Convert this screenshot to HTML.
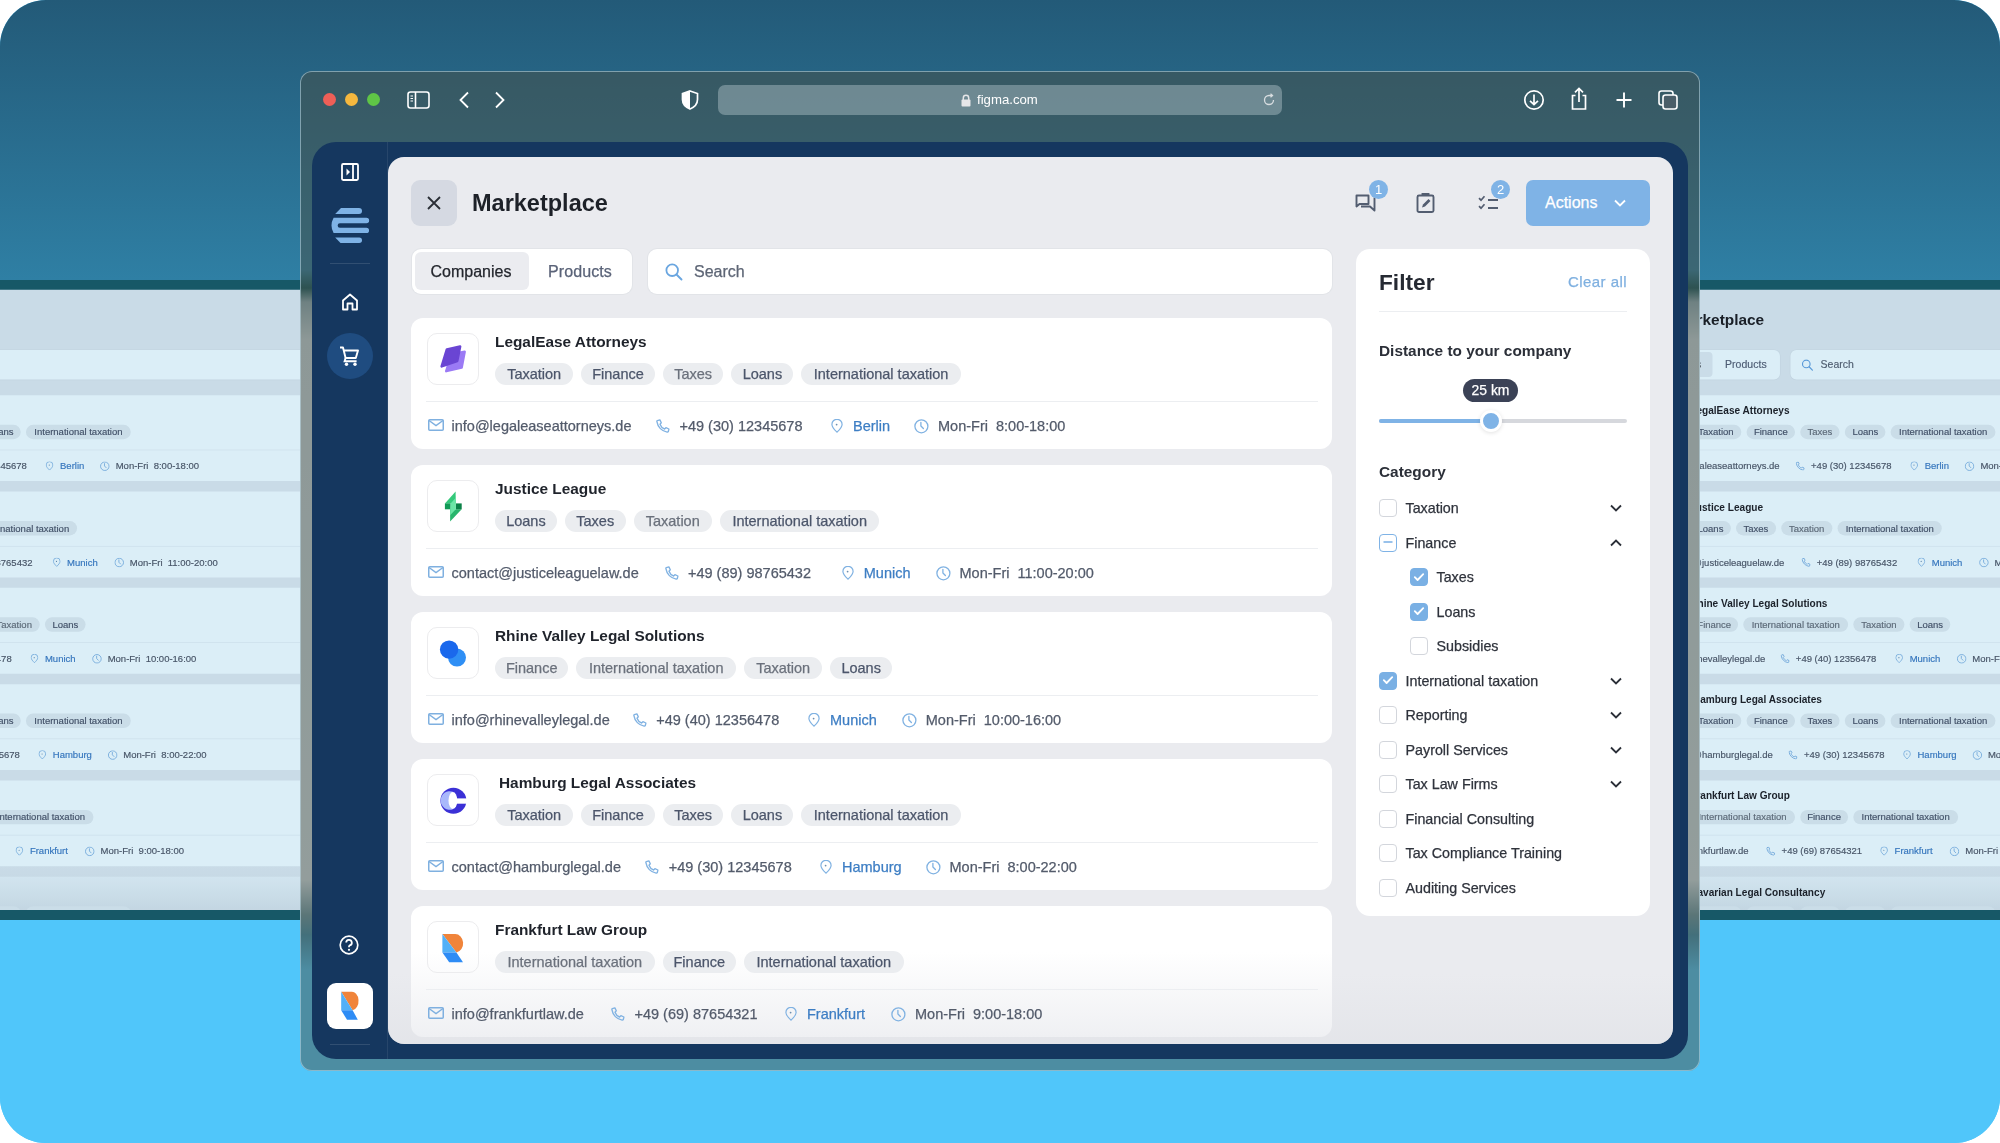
<!DOCTYPE html>
<html><head><meta charset="utf-8"><style>
.ct,.tag,.clab,.stext,.tab,.clear,.actions,.tip{-webkit-text-stroke:0.25px currentColor}
*{box-sizing:border-box;margin:0;padding:0}
html,body{width:2000px;height:1143px;background:#fff;overflow:hidden;font-family:"Liberation Sans",sans-serif}
#scene{position:absolute;left:0;top:0;width:2000px;height:1143px;border-radius:46px;overflow:hidden;background:#50c6fa}
#sky{position:absolute;left:0;top:0;width:2000px;height:285px;background:linear-gradient(#235a78,#2f80a5)}
#ground{position:absolute;left:0;top:915px;width:2000px;height:228px;background:#50c6fa}
.bgwrap{position:absolute;top:0;height:1143px;overflow:hidden}
.bgapp{position:absolute;left:0;top:0;transform-origin:0 0}
.tint{position:absolute;left:0;top:280px;width:100%;height:640px;background:#dbeef7;mix-blend-mode:multiply}
#browser{position:absolute;left:300px;top:71px;width:1400px;height:1000px;border-radius:12px;background:rgba(74,76,64,0.47);box-shadow:inset 0 0 0 1px rgba(190,220,235,0.55)}
.tl{position:absolute;top:22px;width:13px;height:13px;border-radius:50%}
.frame{position:absolute;left:12px;top:71px;width:1376px;background:#15375f;border-radius:24px 24px 24px 24px}
.sidebar{position:absolute;left:0;top:0;width:76px;height:100%}
.si{position:absolute}
.sdiv{position:absolute;left:18px;width:40px;height:1px;background:rgba(255,255,255,0.12)}
.cartc{position:absolute;left:15px;top:191px;width:46px;height:46px;border-radius:50%;background:#1f4c80;display:flex;align-items:center;justify-content:center}
.rtile{position:absolute;left:15px;width:46px;height:46px;border-radius:9px;background:#fff}
.vline{position:absolute;left:75px;top:0;width:1px;height:100%;background:rgba(255,255,255,0.08)}
.panel{position:absolute;left:76px;top:15px;width:1285px;height:886px;background:#eaebef;border-radius:16px;overflow:hidden}
.closebtn{position:absolute;left:23px;top:23px;width:46px;height:46px;border-radius:9px;background:#d5d9e2;display:flex;align-items:center;justify-content:center}
.title{position:absolute;left:84px;top:31px;font-size:23.5px;font-weight:700;color:#1d2128;line-height:30px}
.hicon{position:absolute}
.badge{position:absolute;width:19px;height:19px;border-radius:50%;background:#7fb3e6;color:#fff;font-size:13px;line-height:19px;text-align:center}
.actions{position:absolute;left:1138px;top:23px;width:124px;height:46px;border-radius:7px;background:#7fb3e6;color:#fff;font-size:16px;line-height:46px;padding-left:19px;display:flex;align-items:center}
.tabs{position:absolute;left:24px;top:92px;width:220px;height:45px;background:#fff;border-radius:9px;box-shadow:0 0 0 1px #e2e4e8}
.tab{position:absolute;top:3px;height:38px;line-height:40px;font-size:16px}
.tab.active{left:3px;width:114px;background:#ebecf0;border-radius:6px;color:#23262d;padding-left:15.5px}
.tab.prod{left:136px;color:#5a6378;letter-spacing:0.1px}
.search{position:absolute;left:260px;top:92px;width:684px;height:45px;background:#fff;border-radius:9px;box-shadow:0 0 0 1px #e2e4e8}
.stext{position:absolute;left:46px;top:0;line-height:45px;font-size:16px;color:#5d6575}
.list{position:absolute;left:0;top:0;width:960px;height:886px}
.card{position:absolute;left:23px;width:921px;height:131px;background:#fff;border-radius:12px}
.logo{position:absolute;left:16px;top:15.4px;width:52px;height:52px;border:1px solid #ececee;border-radius:10px}
.cname{position:absolute;left:84px;top:15px;font-size:15.4px;font-weight:700;color:#1f232b;line-height:18px}
.tags{position:absolute;left:84px;top:45px;display:flex;gap:8px}
.tag{display:block;height:22px;line-height:22px;text-align:center;white-space:nowrap;border-radius:11px;background:#ebedf0;font-size:14.5px}
.cdiv{position:absolute;left:15px;right:14px;top:83px;height:1px;background:#eceef1}
.ic{position:absolute;top:101px}
.ic.pin{top:100.5px}
.ic svg{display:block}
.ct{position:absolute;top:98.5px;line-height:18px;font-size:14.5px;color:#535b6b;white-space:pre}
.city{color:#3d7ec4}
.filter{position:absolute;left:968px;top:92px;width:294px;height:667px;background:#fff;border-radius:14px}
.ftitle{position:absolute;left:23px;top:20px;font-size:22.7px;font-weight:700;color:#262a33;line-height:26px}
.clear{position:absolute;right:23px;top:24px;font-size:15px;letter-spacing:0.45px;color:#7fb0e0;line-height:18px}
.fdiv{position:absolute;left:23px;right:23px;top:61.5px;height:1px;background:#eceef1}
.dist{position:absolute;left:23px;top:93px;font-size:15.4px;font-weight:700;color:#2b2f38;line-height:18px}
.tip{position:absolute;left:107px;top:129.5px;width:55px;height:23.5px;border-radius:12px;background:#3b4256;color:#fff;font-size:13.9px;line-height:23.5px;text-align:center}
.track{position:absolute;left:23px;top:170px;width:248px;height:4px;border-radius:2px;background:#d6d8dd}
.trackfill{position:absolute;left:23px;top:170px;width:112px;height:4px;border-radius:2px;background:#7fb3e6}
.thumb{position:absolute;left:123.5px;top:161px;width:22px;height:22px;border-radius:50%;background:#7fb3e6;border:3.5px solid #fff;box-shadow:0 1px 4px rgba(0,0,0,0.12)}
.cat{position:absolute;left:23px;top:214px;font-size:15.4px;font-weight:700;color:#2b2f38;line-height:18px}
.crow{position:absolute;height:18px;display:flex;align-items:center}
.cb{display:block;width:18px;height:18px;border-radius:4px;border:1.5px solid #d3d6dc;margin-right:8.5px;position:relative}
.cb svg{position:absolute;left:-1.5px;top:-1.5px}
.cb.minus{border-color:#7fb3e6}
.cb.checked{background:#7ab0e4;border-color:#7ab0e4}
.clab{font-size:14.3px;color:#2f333c;line-height:18px}
.chev{position:absolute;left:254px}
.chev svg{display:block}
.ustrip{position:absolute;width:12px;top:240px;height:760px;background:linear-gradient(#2e7aa0 0,#2f7fa3 30px,#145760 48px,#8fb0bd 62px,#c9dce5 100px,#d3e5ee 640px,#6a9aaa 675px,#3d8fb0 695px,#50c6fa 730px)}
.fade{position:absolute;left:0;bottom:0;width:100%;height:70px;background:linear-gradient(rgba(233,234,238,0),rgba(220,222,227,0.45))}
</style></head>
<body><div id="scene">
<div id="sky"></div>
<div id="ground"></div>
<div class="bgwrap" style="left:0px;width:300px">
  <div class="bgapp" style="transform:translate(-498.7px,187px) scale(0.655)">
    <div style="position:absolute;left:300px;top:71px;width:1400px;height:1000px"><div class="frame" style="height:977px;background:#1a5e6a">
  <div class="sidebar">
    <svg class="si" style="left:29px;top:21px" width="18" height="18" viewBox="0 0 18 18"><rect x="1" y="1" width="16" height="16" rx="1.2" fill="none" stroke="#fff" stroke-width="1.8"/><path d="M12 1V17" stroke="#fff" stroke-width="1.8"/><path d="M5.5 5.5L9 9L5.5 12.5Z" fill="#fff"/></svg>
    <svg class="si" style="left:18px;top:63px" width="40" height="40" viewBox="0 0 40 40"><g fill="#7fb3e6"><path d="M11 2.9H29A3 3 0 0 1 29 8.9H5.2Z"/><path d="M3.6 12.8H36.4A2.75 2.75 0 0 1 36.4 18.3H9.9A2.25 2.25 0 0 0 9.9 22.8H36.4A2.65 2.65 0 0 1 36.4 28.1H3.6Q-0.6 20.45 3.6 12.8Z"/><path d="M5.2 32.5H29.25A2.75 2.75 0 0 1 29.25 38H10.5Z"/></g></svg>
    <div class="sdiv" style="top:121px"></div>
    <svg class="si" style="left:29px;top:151px" width="18" height="18" viewBox="0 0 18 18"><path d="M2 16.5V7.5L9 1.5L16 7.5V16.5H11.5V10.5H6.5V16.5Z" fill="none" stroke="#fff" stroke-width="1.8" stroke-linejoin="round"/></svg>
    <div class="cartc"><svg width="22" height="22" viewBox="0 0 22 22"><path d="M1 2.5h3l2.6 10.5h10.2l2.2-7.5H5.2" fill="none" stroke="#fff" stroke-width="1.9" stroke-linejoin="round"/><path d="M6.6 13l-1 3.2h12" fill="none" stroke="#fff" stroke-width="1.9"/><circle cx="7.5" cy="19.2" r="1.7" fill="#fff"/><circle cx="16" cy="19.2" r="1.7" fill="#fff"/></svg></div>
    <svg class="si" style="left:27px;top:852.5px" width="20" height="20" viewBox="0 0 20 20"><circle cx="10" cy="10" r="8.8" fill="none" stroke="#fff" stroke-width="1.7"/><path d="M7.2 7.6A2.8 2.8 0 1 1 10.8 10.3C10.2 10.6 10 11 10 11.8V12.3" fill="none" stroke="#fff" stroke-width="1.8"/><circle cx="10" cy="14.8" r="1.1" fill="#fff"/></svg>
    <div class="rtile" style="top:901px"><svg width="46" height="46" viewBox="0 0 46 46" style="position:absolute;left:0;top:0"><path d="M14.2 8.8 H24.2 A6.6 9.2 0 0 1 25.6 27.2 Z" fill="#f0843a"/><path d="M14.2 8.8 L25.6 27.2 H14.2Z" fill="#52b0f7"/><path d="M14.2 27.2 H25.6 L30.8 36.8 H20Z" fill="#2e8cf5"/></svg></div>
    <div class="sdiv" style="top:962px"></div>
  </div>
  <div class="vline"></div>
  <div class="panel" style="height:947px">
  <div class="closebtn"><svg width="16" height="16" viewBox="0 0 16 16"><path d="M2 2L14 14M14 2L2 14" stroke="#2a2e36" stroke-width="1.8"/></svg></div>
  <div class="title">Marketplace</div>
  <div class="hicon" style="left:967px;top:36px"><svg width="22" height="22" viewBox="0 0 22 22"><path d="M1.5 2.5h12v8.5h-9l-3 2.5z" fill="none" stroke="#535d70" stroke-width="1.9" stroke-linejoin="round"/><path d="M6 13.5h9l4.5 4v-13" fill="none" stroke="#535d70" stroke-width="1.9" stroke-linejoin="round"/></svg></div>
  <div class="badge" style="left:981px;top:23px">1</div>
  <div class="hicon" style="left:1028px;top:35px"><svg width="20" height="22" viewBox="0 0 20 22"><rect x="1.5" y="3.5" width="16" height="16.5" rx="1.5" fill="none" stroke="#535d70" stroke-width="1.9"/><path d="M6.5 3.5V2h6v1.5" fill="none" stroke="#535d70" stroke-width="1.9"/><path d="M6 15.5l1-3 5.5-5.5 2 2-5.5 5.5z" fill="#535d70"/></svg></div>
  <div class="hicon" style="left:1090px;top:38px"><svg width="22" height="16" viewBox="0 0 22 16"><path d="M1 3.2l2 2 3.5-4M1 11.2l2 2 3.5-4" fill="none" stroke="#535d70" stroke-width="1.7"/><path d="M10 5h10M10 13h10" stroke="#535d70" stroke-width="1.9"/></svg></div>
  <div class="badge" style="left:1103px;top:23px">2</div>
  <div class="actions">Actions <svg width="12" height="8" viewBox="0 0 12 8" style="margin-left:16.5px"><path d="M1 1.5L6 6.5L11 1.5" fill="none" stroke="#fff" stroke-width="1.8"/></svg></div>
  <div class="tabs"><div class="tab active">Companies</div><div class="tab prod">Products</div></div>
  <div class="search"><svg width="18" height="18" viewBox="0 0 18 18" style="position:absolute;left:17px;top:14px"><circle cx="7.2" cy="7.2" r="5.8" fill="none" stroke="#6aa6e0" stroke-width="1.8"/><path d="M11.5 11.5L16.5 16.5" stroke="#6aa6e0" stroke-width="1.9" stroke-linecap="round"/></svg><span class="stext">Search</span></div>
  <div class="fade"></div>
  <div class="list"><div class="card" style="top:161px">
  <div class="logo"><svg width="52" height="52" viewBox="0 0 52 52" style="position:absolute;left:-1px;top:-1px"><path d="M24.6 21.5 L37.6 18.7 L34.6 34.6 L19.3 38.1Z" fill="#9b7af5" stroke="#9b7af5" stroke-width="2.6" stroke-linejoin="round"/><path d="M19.9 16.5 L33.1 13.6 L30.2 28 L14.7 33.3Z" fill="#6a45d3" stroke="#6a45d3" stroke-width="2.6" stroke-linejoin="round"/></svg></div>
  <div class="cname" style="left:84px">LegalEase Attorneys</div>
  <div class="tags"><span class="tag" style="color:#4c566b;width:78.3px">Taxation</span><span class="tag" style="color:#4c566b;width:73.4px">Finance</span><span class="tag" style="color:#6b717c;width:60.8px">Taxes</span><span class="tag" style="color:#4c566b;width:61.8px">Loans</span><span class="tag" style="color:#4c566b;width:159.6px">International taxation</span></div>
  <div class="cdiv"></div>
  <div class="ic" style="left:16.5px"><svg width="16" height="12" viewBox="0 0 16 12"><rect x="0.75" y="0.75" width="14.5" height="10.5" rx="1" fill="none" stroke="#7fb0e0" stroke-width="1.5"/><path d="M1 1.5 L8 6.5 L15 1.5" fill="none" stroke="#7fb0e0" stroke-width="1.5"/></svg></div><div class="ct" style="left:40.5px">info@legaleaseattorneys.de</div>
  <div class="ic" style="left:244.75px"><svg width="14" height="14" viewBox="0 0 14 14"><path d="M1.3 1.6 L3.9 0.9 L5.3 3.8 L4 5.2 C4.6 6.9 6.8 9.3 8.6 10 L9.9 8.7 L12.9 10 L12.3 12.6 C12.1 13.1 11.6 13.2 11.1 13.1 C5.9 12.3 1.7 8.1 0.9 2.7 C0.8 2.2 0.9 1.8 1.3 1.6Z" fill="none" stroke="#80b2e2" stroke-width="1.35" stroke-linejoin="round"/></svg></div><div class="ct" style="left:268.5px">+49 (30) 12345678</div>
  <div class="ic pin" style="left:419.5px"><svg width="12" height="14" viewBox="0 0 12 14"><path d="M6 13.2C3.4 10.6 0.9 8.2 0.9 5.4A5.1 5.1 0 0 1 11.1 5.4C11.1 8.2 8.6 10.6 6 13.2z" fill="none" stroke="#80b2e2" stroke-width="1.2"/><circle cx="5.6" cy="5.6" r="0.9" fill="#6d8fb0"/></svg></div><div class="ct city" style="left:442px">Berlin</div>
  <div class="ic" style="left:502.75px"><svg width="15" height="15" viewBox="0 0 15 15"><circle cx="7.4" cy="7.3" r="6.5" fill="none" stroke="#80b2e2" stroke-width="1.3"/><path d="M6.9 3.3V6.9L9.4 9.5" fill="none" stroke="#80b2e2" stroke-width="1.3" stroke-linecap="round"/></svg></div><div class="ct" style="left:527px">Mon-Fri&nbsp;&nbsp;8:00-18:00</div>
</div><div class="card" style="top:308px">
  <div class="logo"><svg width="52" height="52" viewBox="0 0 52 52" style="position:absolute;left:-1px;top:-1px"><path d="M28.6 11.6 L17.9 23.4 H28.8Z" fill="#34c97a"/><path d="M34.7 29.3 L23.1 41.4 V29.3Z" fill="#27b56c"/><rect x="17.9" y="23.4" width="5.8" height="5.9" fill="#119a56"/><rect x="28.7" y="23.4" width="6" height="5.9" fill="#0b8147"/><path d="M23.6 23.4 L28.8 17.8 V29.3 L23.1 35.2Z" fill="#6be6a6"/></svg></div>
  <div class="cname" style="left:84px">Justice League</div>
  <div class="tags"><span class="tag" style="color:#4c566b;width:61.8px">Loans</span><span class="tag" style="color:#4c566b;width:60.8px">Taxes</span><span class="tag" style="color:#6b717c;width:78.3px">Taxation</span><span class="tag" style="color:#4c566b;width:159.6px">International taxation</span></div>
  <div class="cdiv"></div>
  <div class="ic" style="left:16.5px"><svg width="16" height="12" viewBox="0 0 16 12"><rect x="0.75" y="0.75" width="14.5" height="10.5" rx="1" fill="none" stroke="#7fb0e0" stroke-width="1.5"/><path d="M1 1.5 L8 6.5 L15 1.5" fill="none" stroke="#7fb0e0" stroke-width="1.5"/></svg></div><div class="ct" style="left:40.5px">contact@justiceleaguelaw.de</div>
  <div class="ic" style="left:253.5px"><svg width="14" height="14" viewBox="0 0 14 14"><path d="M1.3 1.6 L3.9 0.9 L5.3 3.8 L4 5.2 C4.6 6.9 6.8 9.3 8.6 10 L9.9 8.7 L12.9 10 L12.3 12.6 C12.1 13.1 11.6 13.2 11.1 13.1 C5.9 12.3 1.7 8.1 0.9 2.7 C0.8 2.2 0.9 1.8 1.3 1.6Z" fill="none" stroke="#80b2e2" stroke-width="1.35" stroke-linejoin="round"/></svg></div><div class="ct" style="left:277px">+49 (89) 98765432</div>
  <div class="ic pin" style="left:430.75px"><svg width="12" height="14" viewBox="0 0 12 14"><path d="M6 13.2C3.4 10.6 0.9 8.2 0.9 5.4A5.1 5.1 0 0 1 11.1 5.4C11.1 8.2 8.6 10.6 6 13.2z" fill="none" stroke="#80b2e2" stroke-width="1.2"/><circle cx="5.6" cy="5.6" r="0.9" fill="#6d8fb0"/></svg></div><div class="ct city" style="left:452.75px">Munich</div>
  <div class="ic" style="left:524.5px"><svg width="15" height="15" viewBox="0 0 15 15"><circle cx="7.4" cy="7.3" r="6.5" fill="none" stroke="#80b2e2" stroke-width="1.3"/><path d="M6.9 3.3V6.9L9.4 9.5" fill="none" stroke="#80b2e2" stroke-width="1.3" stroke-linecap="round"/></svg></div><div class="ct" style="left:548.5px">Mon-Fri&nbsp;&nbsp;11:00-20:00</div>
</div><div class="card" style="top:455px">
  <div class="logo"><svg width="52" height="52" viewBox="0 0 52 52" style="position:absolute;left:-1px;top:-1px"><circle cx="30" cy="30.6" r="9" fill="#2f8ff5"/><circle cx="22.1" cy="22.6" r="9.2" fill="#1a68ec"/></svg></div>
  <div class="cname" style="left:84px">Rhine Valley Legal Solutions</div>
  <div class="tags"><span class="tag" style="color:#6b717c;width:73.4px">Finance</span><span class="tag" style="color:#6b717c;width:159.6px">International taxation</span><span class="tag" style="color:#6b717c;width:78.3px">Taxation</span><span class="tag" style="color:#4c566b;width:61.8px">Loans</span></div>
  <div class="cdiv"></div>
  <div class="ic" style="left:16.5px"><svg width="16" height="12" viewBox="0 0 16 12"><rect x="0.75" y="0.75" width="14.5" height="10.5" rx="1" fill="none" stroke="#7fb0e0" stroke-width="1.5"/><path d="M1 1.5 L8 6.5 L15 1.5" fill="none" stroke="#7fb0e0" stroke-width="1.5"/></svg></div><div class="ct" style="left:40.5px">info@rhinevalleylegal.de</div>
  <div class="ic" style="left:221.5px"><svg width="14" height="14" viewBox="0 0 14 14"><path d="M1.3 1.6 L3.9 0.9 L5.3 3.8 L4 5.2 C4.6 6.9 6.8 9.3 8.6 10 L9.9 8.7 L12.9 10 L12.3 12.6 C12.1 13.1 11.6 13.2 11.1 13.1 C5.9 12.3 1.7 8.1 0.9 2.7 C0.8 2.2 0.9 1.8 1.3 1.6Z" fill="none" stroke="#80b2e2" stroke-width="1.35" stroke-linejoin="round"/></svg></div><div class="ct" style="left:245.25px">+49 (40) 12356478</div>
  <div class="ic pin" style="left:397.0px"><svg width="12" height="14" viewBox="0 0 12 14"><path d="M6 13.2C3.4 10.6 0.9 8.2 0.9 5.4A5.1 5.1 0 0 1 11.1 5.4C11.1 8.2 8.6 10.6 6 13.2z" fill="none" stroke="#80b2e2" stroke-width="1.2"/><circle cx="5.6" cy="5.6" r="0.9" fill="#6d8fb0"/></svg></div><div class="ct city" style="left:419px">Munich</div>
  <div class="ic" style="left:491px"><svg width="15" height="15" viewBox="0 0 15 15"><circle cx="7.4" cy="7.3" r="6.5" fill="none" stroke="#80b2e2" stroke-width="1.3"/><path d="M6.9 3.3V6.9L9.4 9.5" fill="none" stroke="#80b2e2" stroke-width="1.3" stroke-linecap="round"/></svg></div><div class="ct" style="left:514.75px">Mon-Fri&nbsp;&nbsp;10:00-16:00</div>
</div><div class="card" style="top:602px">
  <div class="logo"><svg width="52" height="52" viewBox="0 0 52 52" style="position:absolute;left:-1px;top:-1px"><circle cx="26.4" cy="26.7" r="13" fill="#3b30d6"/><path d="M25.9 17.85 A9 9.3 0 1 0 25.9 35.15 Z" fill="#a9b8fb"/><ellipse cx="25.9" cy="26.6" rx="4.4" ry="8.5" fill="#fff"/><rect x="25.9" y="24.4" width="16" height="5.3" fill="#fff"/></svg></div>
  <div class="cname" style="left:88px">Hamburg Legal Associates</div>
  <div class="tags"><span class="tag" style="color:#4c566b;width:78.3px">Taxation</span><span class="tag" style="color:#4c566b;width:73.4px">Finance</span><span class="tag" style="color:#4c566b;width:60.8px">Taxes</span><span class="tag" style="color:#4c566b;width:61.8px">Loans</span><span class="tag" style="color:#4c566b;width:159.6px">International taxation</span></div>
  <div class="cdiv"></div>
  <div class="ic" style="left:16.5px"><svg width="16" height="12" viewBox="0 0 16 12"><rect x="0.75" y="0.75" width="14.5" height="10.5" rx="1" fill="none" stroke="#7fb0e0" stroke-width="1.5"/><path d="M1 1.5 L8 6.5 L15 1.5" fill="none" stroke="#7fb0e0" stroke-width="1.5"/></svg></div><div class="ct" style="left:40.5px">contact@hamburglegal.de</div>
  <div class="ic" style="left:234px"><svg width="14" height="14" viewBox="0 0 14 14"><path d="M1.3 1.6 L3.9 0.9 L5.3 3.8 L4 5.2 C4.6 6.9 6.8 9.3 8.6 10 L9.9 8.7 L12.9 10 L12.3 12.6 C12.1 13.1 11.6 13.2 11.1 13.1 C5.9 12.3 1.7 8.1 0.9 2.7 C0.8 2.2 0.9 1.8 1.3 1.6Z" fill="none" stroke="#80b2e2" stroke-width="1.35" stroke-linejoin="round"/></svg></div><div class="ct" style="left:257.75px">+49 (30) 12345678</div>
  <div class="ic pin" style="left:409.0px"><svg width="12" height="14" viewBox="0 0 12 14"><path d="M6 13.2C3.4 10.6 0.9 8.2 0.9 5.4A5.1 5.1 0 0 1 11.1 5.4C11.1 8.2 8.6 10.6 6 13.2z" fill="none" stroke="#80b2e2" stroke-width="1.2"/><circle cx="5.6" cy="5.6" r="0.9" fill="#6d8fb0"/></svg></div><div class="ct city" style="left:431px">Hamburg</div>
  <div class="ic" style="left:515.25px"><svg width="15" height="15" viewBox="0 0 15 15"><circle cx="7.4" cy="7.3" r="6.5" fill="none" stroke="#80b2e2" stroke-width="1.3"/><path d="M6.9 3.3V6.9L9.4 9.5" fill="none" stroke="#80b2e2" stroke-width="1.3" stroke-linecap="round"/></svg></div><div class="ct" style="left:538.5px">Mon-Fri&nbsp;&nbsp;8:00-22:00</div>
</div><div class="card" style="top:749px">
  <div class="logo"><svg width="52" height="52" viewBox="0 0 52 52" style="position:absolute;left:-1px;top:-1px"><path d="M15.4 13.1 H28.1 A7.9 9.2 0 0 1 29.4 31.4 Z" fill="#f0843a"/><path d="M15.4 13.1 L29.4 31.4 H15.4Z" fill="#52b0f7"/><path d="M15.4 31.4 H29.4 L36 41.3 H22.2Z" fill="#2e8cf5"/></svg></div>
  <div class="cname" style="left:84px">Frankfurt Law Group</div>
  <div class="tags"><span class="tag" style="color:#6b717c;width:159.6px">International taxation</span><span class="tag" style="color:#4c566b;width:73.4px">Finance</span><span class="tag" style="color:#4c566b;width:159.6px">International taxation</span></div>
  <div class="cdiv"></div>
  <div class="ic" style="left:16.5px"><svg width="16" height="12" viewBox="0 0 16 12"><rect x="0.75" y="0.75" width="14.5" height="10.5" rx="1" fill="none" stroke="#7fb0e0" stroke-width="1.5"/><path d="M1 1.5 L8 6.5 L15 1.5" fill="none" stroke="#7fb0e0" stroke-width="1.5"/></svg></div><div class="ct" style="left:40.5px">info@frankfurtlaw.de</div>
  <div class="ic" style="left:199.5px"><svg width="14" height="14" viewBox="0 0 14 14"><path d="M1.3 1.6 L3.9 0.9 L5.3 3.8 L4 5.2 C4.6 6.9 6.8 9.3 8.6 10 L9.9 8.7 L12.9 10 L12.3 12.6 C12.1 13.1 11.6 13.2 11.1 13.1 C5.9 12.3 1.7 8.1 0.9 2.7 C0.8 2.2 0.9 1.8 1.3 1.6Z" fill="none" stroke="#80b2e2" stroke-width="1.35" stroke-linejoin="round"/></svg></div><div class="ct" style="left:223.5px">+49 (69) 87654321</div>
  <div class="ic pin" style="left:374.0px"><svg width="12" height="14" viewBox="0 0 12 14"><path d="M6 13.2C3.4 10.6 0.9 8.2 0.9 5.4A5.1 5.1 0 0 1 11.1 5.4C11.1 8.2 8.6 10.6 6 13.2z" fill="none" stroke="#80b2e2" stroke-width="1.2"/><circle cx="5.6" cy="5.6" r="0.9" fill="#6d8fb0"/></svg></div><div class="ct city" style="left:396px">Frankfurt</div>
  <div class="ic" style="left:480.25px"><svg width="15" height="15" viewBox="0 0 15 15"><circle cx="7.4" cy="7.3" r="6.5" fill="none" stroke="#80b2e2" stroke-width="1.3"/><path d="M6.9 3.3V6.9L9.4 9.5" fill="none" stroke="#80b2e2" stroke-width="1.3" stroke-linecap="round"/></svg></div><div class="ct" style="left:504px">Mon-Fri&nbsp;&nbsp;9:00-18:00</div>
</div><div class="card" style="top:896px;background:linear-gradient(#f4f5f7 0,#e4e6ea 51px)">
  <div class="logo"><svg width="52" height="52" viewBox="0 0 52 52" style="position:absolute;left:-1px;top:-1px"><path d="M24.6 21.5 L37.6 18.7 L34.6 34.6 L19.3 38.1Z" fill="#9b7af5" stroke="#9b7af5" stroke-width="2.6" stroke-linejoin="round"/><path d="M19.9 16.5 L33.1 13.6 L30.2 28 L14.7 33.3Z" fill="#6a45d3" stroke="#6a45d3" stroke-width="2.6" stroke-linejoin="round"/></svg></div>
  <div class="cname" style="left:84px">Bavarian Legal Consultancy</div>
  <div class="tags"><span class="tag" style="color:#4c566b;width:78.3px">Taxation</span><span class="tag" style="color:#4c566b;width:73.4px">Finance</span><span class="tag" style="color:#4c566b;width:60.8px">Taxes</span><span class="tag" style="color:#4c566b;width:61.8px">Loans</span><span class="tag" style="color:#4c566b;width:159.6px">International taxation</span></div>
  <div class="cdiv"></div>
  <div class="ic" style="left:16.5px"><svg width="16" height="12" viewBox="0 0 16 12"><rect x="0.75" y="0.75" width="14.5" height="10.5" rx="1" fill="none" stroke="#7fb0e0" stroke-width="1.5"/><path d="M1 1.5 L8 6.5 L15 1.5" fill="none" stroke="#7fb0e0" stroke-width="1.5"/></svg></div><div class="ct" style="left:40.5px">info@bavarianlegal.de</div>
  <div class="ic" style="left:199.5px"><svg width="14" height="14" viewBox="0 0 14 14"><path d="M1.3 1.6 L3.9 0.9 L5.3 3.8 L4 5.2 C4.6 6.9 6.8 9.3 8.6 10 L9.9 8.7 L12.9 10 L12.3 12.6 C12.1 13.1 11.6 13.2 11.1 13.1 C5.9 12.3 1.7 8.1 0.9 2.7 C0.8 2.2 0.9 1.8 1.3 1.6Z" fill="none" stroke="#80b2e2" stroke-width="1.35" stroke-linejoin="round"/></svg></div><div class="ct" style="left:223.5px">+49 (89) 12345678</div>
  <div class="ic pin" style="left:374.0px"><svg width="12" height="14" viewBox="0 0 12 14"><path d="M6 13.2C3.4 10.6 0.9 8.2 0.9 5.4A5.1 5.1 0 0 1 11.1 5.4C11.1 8.2 8.6 10.6 6 13.2z" fill="none" stroke="#80b2e2" stroke-width="1.2"/><circle cx="5.6" cy="5.6" r="0.9" fill="#6d8fb0"/></svg></div><div class="ct city" style="left:396px">Munich</div>
  <div class="ic" style="left:480.25px"><svg width="15" height="15" viewBox="0 0 15 15"><circle cx="7.4" cy="7.3" r="6.5" fill="none" stroke="#80b2e2" stroke-width="1.3"/><path d="M6.9 3.3V6.9L9.4 9.5" fill="none" stroke="#80b2e2" stroke-width="1.3" stroke-linecap="round"/></svg></div><div class="ct" style="left:504px">Mon-Fri&nbsp;&nbsp;8:00-18:00</div>
</div></div>
  <div class="filter">
  <div class="ftitle">Filter</div>
  <div class="clear">Clear all</div>
  <div class="fdiv"></div>
  <div class="dist">Distance to your company</div>
  <div class="tip">25 km</div>
  <div class="track"></div><div class="trackfill"></div>
  <div class="thumb"></div>
  <div class="cat">Category</div>
  <div class="crow" style="top:250.1px;left:23px"><span class="cb"></span><span class="clab">Taxation</span></div><div class="chev" style="top:255.1px"><svg width="12" height="8" viewBox="0 0 12 8"><path d="M1 1.5 L6 6.5 L11 1.5" fill="none" stroke="#2b2f38" stroke-width="1.8"/></svg></div><div class="crow" style="top:284.6px;left:23px"><span class="cb minus"><svg width="18" height="18" viewBox="0 0 18 18"><path d="M4.5 9H13.5" stroke="#7fb3e6" stroke-width="1.6"/></svg></span><span class="clab">Finance</span></div><div class="chev" style="top:289.6px"><svg width="12" height="8" viewBox="0 0 12 8"><path d="M1 6.5 L6 1.5 L11 6.5" fill="none" stroke="#2b2f38" stroke-width="1.8"/></svg></div><div class="crow" style="top:319.1px;left:54px"><span class="cb checked"><svg width="18" height="18" viewBox="0 0 18 18"><path d="M4.8 9.2 L7.6 12 L13.2 6.2" fill="none" stroke="#fff" stroke-width="1.8" stroke-linecap="round" stroke-linejoin="round"/></svg></span><span class="clab">Taxes</span></div><div class="crow" style="top:353.6px;left:54px"><span class="cb checked"><svg width="18" height="18" viewBox="0 0 18 18"><path d="M4.8 9.2 L7.6 12 L13.2 6.2" fill="none" stroke="#fff" stroke-width="1.8" stroke-linecap="round" stroke-linejoin="round"/></svg></span><span class="clab">Loans</span></div><div class="crow" style="top:388.1px;left:54px"><span class="cb"></span><span class="clab">Subsidies</span></div><div class="crow" style="top:422.6px;left:23px"><span class="cb checked"><svg width="18" height="18" viewBox="0 0 18 18"><path d="M4.8 9.2 L7.6 12 L13.2 6.2" fill="none" stroke="#fff" stroke-width="1.8" stroke-linecap="round" stroke-linejoin="round"/></svg></span><span class="clab">International taxation</span></div><div class="chev" style="top:427.6px"><svg width="12" height="8" viewBox="0 0 12 8"><path d="M1 1.5 L6 6.5 L11 1.5" fill="none" stroke="#2b2f38" stroke-width="1.8"/></svg></div><div class="crow" style="top:457.1px;left:23px"><span class="cb"></span><span class="clab">Reporting</span></div><div class="chev" style="top:462.1px"><svg width="12" height="8" viewBox="0 0 12 8"><path d="M1 1.5 L6 6.5 L11 1.5" fill="none" stroke="#2b2f38" stroke-width="1.8"/></svg></div><div class="crow" style="top:491.6px;left:23px"><span class="cb"></span><span class="clab">Payroll Services</span></div><div class="chev" style="top:496.6px"><svg width="12" height="8" viewBox="0 0 12 8"><path d="M1 1.5 L6 6.5 L11 1.5" fill="none" stroke="#2b2f38" stroke-width="1.8"/></svg></div><div class="crow" style="top:526.1px;left:23px"><span class="cb"></span><span class="clab">Tax Law Firms</span></div><div class="chev" style="top:531.1px"><svg width="12" height="8" viewBox="0 0 12 8"><path d="M1 1.5 L6 6.5 L11 1.5" fill="none" stroke="#2b2f38" stroke-width="1.8"/></svg></div><div class="crow" style="top:560.6px;left:23px"><span class="cb"></span><span class="clab">Financial Consulting</span></div><div class="crow" style="top:595.1px;left:23px"><span class="cb"></span><span class="clab">Tax Compliance Training</span></div><div class="crow" style="top:629.6px;left:23px"><span class="cb"></span><span class="clab">Auditing Services</span></div>
</div>
</div>
</div></div>
  </div>
  <div class="tint"></div>
</div>
<div class="bgwrap" style="left:1700px;width:300px">
  <div class="bgapp" style="transform:translate(-334px,187px) scale(0.655)">
    <div style="position:absolute;left:300px;top:71px;width:1400px;height:1000px"><div class="frame" style="height:977px;background:#1a5e6a">
  <div class="sidebar">
    <svg class="si" style="left:29px;top:21px" width="18" height="18" viewBox="0 0 18 18"><rect x="1" y="1" width="16" height="16" rx="1.2" fill="none" stroke="#fff" stroke-width="1.8"/><path d="M12 1V17" stroke="#fff" stroke-width="1.8"/><path d="M5.5 5.5L9 9L5.5 12.5Z" fill="#fff"/></svg>
    <svg class="si" style="left:18px;top:63px" width="40" height="40" viewBox="0 0 40 40"><g fill="#7fb3e6"><path d="M11 2.9H29A3 3 0 0 1 29 8.9H5.2Z"/><path d="M3.6 12.8H36.4A2.75 2.75 0 0 1 36.4 18.3H9.9A2.25 2.25 0 0 0 9.9 22.8H36.4A2.65 2.65 0 0 1 36.4 28.1H3.6Q-0.6 20.45 3.6 12.8Z"/><path d="M5.2 32.5H29.25A2.75 2.75 0 0 1 29.25 38H10.5Z"/></g></svg>
    <div class="sdiv" style="top:121px"></div>
    <svg class="si" style="left:29px;top:151px" width="18" height="18" viewBox="0 0 18 18"><path d="M2 16.5V7.5L9 1.5L16 7.5V16.5H11.5V10.5H6.5V16.5Z" fill="none" stroke="#fff" stroke-width="1.8" stroke-linejoin="round"/></svg>
    <div class="cartc"><svg width="22" height="22" viewBox="0 0 22 22"><path d="M1 2.5h3l2.6 10.5h10.2l2.2-7.5H5.2" fill="none" stroke="#fff" stroke-width="1.9" stroke-linejoin="round"/><path d="M6.6 13l-1 3.2h12" fill="none" stroke="#fff" stroke-width="1.9"/><circle cx="7.5" cy="19.2" r="1.7" fill="#fff"/><circle cx="16" cy="19.2" r="1.7" fill="#fff"/></svg></div>
    <svg class="si" style="left:27px;top:852.5px" width="20" height="20" viewBox="0 0 20 20"><circle cx="10" cy="10" r="8.8" fill="none" stroke="#fff" stroke-width="1.7"/><path d="M7.2 7.6A2.8 2.8 0 1 1 10.8 10.3C10.2 10.6 10 11 10 11.8V12.3" fill="none" stroke="#fff" stroke-width="1.8"/><circle cx="10" cy="14.8" r="1.1" fill="#fff"/></svg>
    <div class="rtile" style="top:901px"><svg width="46" height="46" viewBox="0 0 46 46" style="position:absolute;left:0;top:0"><path d="M14.2 8.8 H24.2 A6.6 9.2 0 0 1 25.6 27.2 Z" fill="#f0843a"/><path d="M14.2 8.8 L25.6 27.2 H14.2Z" fill="#52b0f7"/><path d="M14.2 27.2 H25.6 L30.8 36.8 H20Z" fill="#2e8cf5"/></svg></div>
    <div class="sdiv" style="top:962px"></div>
  </div>
  <div class="vline"></div>
  <div class="panel" style="height:947px">
  <div class="closebtn"><svg width="16" height="16" viewBox="0 0 16 16"><path d="M2 2L14 14M14 2L2 14" stroke="#2a2e36" stroke-width="1.8"/></svg></div>
  <div class="title">Marketplace</div>
  <div class="hicon" style="left:967px;top:36px"><svg width="22" height="22" viewBox="0 0 22 22"><path d="M1.5 2.5h12v8.5h-9l-3 2.5z" fill="none" stroke="#535d70" stroke-width="1.9" stroke-linejoin="round"/><path d="M6 13.5h9l4.5 4v-13" fill="none" stroke="#535d70" stroke-width="1.9" stroke-linejoin="round"/></svg></div>
  <div class="badge" style="left:981px;top:23px">1</div>
  <div class="hicon" style="left:1028px;top:35px"><svg width="20" height="22" viewBox="0 0 20 22"><rect x="1.5" y="3.5" width="16" height="16.5" rx="1.5" fill="none" stroke="#535d70" stroke-width="1.9"/><path d="M6.5 3.5V2h6v1.5" fill="none" stroke="#535d70" stroke-width="1.9"/><path d="M6 15.5l1-3 5.5-5.5 2 2-5.5 5.5z" fill="#535d70"/></svg></div>
  <div class="hicon" style="left:1090px;top:38px"><svg width="22" height="16" viewBox="0 0 22 16"><path d="M1 3.2l2 2 3.5-4M1 11.2l2 2 3.5-4" fill="none" stroke="#535d70" stroke-width="1.7"/><path d="M10 5h10M10 13h10" stroke="#535d70" stroke-width="1.9"/></svg></div>
  <div class="badge" style="left:1103px;top:23px">2</div>
  <div class="actions">Actions <svg width="12" height="8" viewBox="0 0 12 8" style="margin-left:16.5px"><path d="M1 1.5L6 6.5L11 1.5" fill="none" stroke="#fff" stroke-width="1.8"/></svg></div>
  <div class="tabs"><div class="tab active">Companies</div><div class="tab prod">Products</div></div>
  <div class="search"><svg width="18" height="18" viewBox="0 0 18 18" style="position:absolute;left:17px;top:14px"><circle cx="7.2" cy="7.2" r="5.8" fill="none" stroke="#6aa6e0" stroke-width="1.8"/><path d="M11.5 11.5L16.5 16.5" stroke="#6aa6e0" stroke-width="1.9" stroke-linecap="round"/></svg><span class="stext">Search</span></div>
  <div class="fade"></div>
  <div class="list"><div class="card" style="top:161px">
  <div class="logo"><svg width="52" height="52" viewBox="0 0 52 52" style="position:absolute;left:-1px;top:-1px"><path d="M24.6 21.5 L37.6 18.7 L34.6 34.6 L19.3 38.1Z" fill="#9b7af5" stroke="#9b7af5" stroke-width="2.6" stroke-linejoin="round"/><path d="M19.9 16.5 L33.1 13.6 L30.2 28 L14.7 33.3Z" fill="#6a45d3" stroke="#6a45d3" stroke-width="2.6" stroke-linejoin="round"/></svg></div>
  <div class="cname" style="left:84px">LegalEase Attorneys</div>
  <div class="tags"><span class="tag" style="color:#4c566b;width:78.3px">Taxation</span><span class="tag" style="color:#4c566b;width:73.4px">Finance</span><span class="tag" style="color:#6b717c;width:60.8px">Taxes</span><span class="tag" style="color:#4c566b;width:61.8px">Loans</span><span class="tag" style="color:#4c566b;width:159.6px">International taxation</span></div>
  <div class="cdiv"></div>
  <div class="ic" style="left:16.5px"><svg width="16" height="12" viewBox="0 0 16 12"><rect x="0.75" y="0.75" width="14.5" height="10.5" rx="1" fill="none" stroke="#7fb0e0" stroke-width="1.5"/><path d="M1 1.5 L8 6.5 L15 1.5" fill="none" stroke="#7fb0e0" stroke-width="1.5"/></svg></div><div class="ct" style="left:40.5px">info@legaleaseattorneys.de</div>
  <div class="ic" style="left:244.75px"><svg width="14" height="14" viewBox="0 0 14 14"><path d="M1.3 1.6 L3.9 0.9 L5.3 3.8 L4 5.2 C4.6 6.9 6.8 9.3 8.6 10 L9.9 8.7 L12.9 10 L12.3 12.6 C12.1 13.1 11.6 13.2 11.1 13.1 C5.9 12.3 1.7 8.1 0.9 2.7 C0.8 2.2 0.9 1.8 1.3 1.6Z" fill="none" stroke="#80b2e2" stroke-width="1.35" stroke-linejoin="round"/></svg></div><div class="ct" style="left:268.5px">+49 (30) 12345678</div>
  <div class="ic pin" style="left:419.5px"><svg width="12" height="14" viewBox="0 0 12 14"><path d="M6 13.2C3.4 10.6 0.9 8.2 0.9 5.4A5.1 5.1 0 0 1 11.1 5.4C11.1 8.2 8.6 10.6 6 13.2z" fill="none" stroke="#80b2e2" stroke-width="1.2"/><circle cx="5.6" cy="5.6" r="0.9" fill="#6d8fb0"/></svg></div><div class="ct city" style="left:442px">Berlin</div>
  <div class="ic" style="left:502.75px"><svg width="15" height="15" viewBox="0 0 15 15"><circle cx="7.4" cy="7.3" r="6.5" fill="none" stroke="#80b2e2" stroke-width="1.3"/><path d="M6.9 3.3V6.9L9.4 9.5" fill="none" stroke="#80b2e2" stroke-width="1.3" stroke-linecap="round"/></svg></div><div class="ct" style="left:527px">Mon-Fri&nbsp;&nbsp;8:00-18:00</div>
</div><div class="card" style="top:308px">
  <div class="logo"><svg width="52" height="52" viewBox="0 0 52 52" style="position:absolute;left:-1px;top:-1px"><path d="M28.6 11.6 L17.9 23.4 H28.8Z" fill="#34c97a"/><path d="M34.7 29.3 L23.1 41.4 V29.3Z" fill="#27b56c"/><rect x="17.9" y="23.4" width="5.8" height="5.9" fill="#119a56"/><rect x="28.7" y="23.4" width="6" height="5.9" fill="#0b8147"/><path d="M23.6 23.4 L28.8 17.8 V29.3 L23.1 35.2Z" fill="#6be6a6"/></svg></div>
  <div class="cname" style="left:84px">Justice League</div>
  <div class="tags"><span class="tag" style="color:#4c566b;width:61.8px">Loans</span><span class="tag" style="color:#4c566b;width:60.8px">Taxes</span><span class="tag" style="color:#6b717c;width:78.3px">Taxation</span><span class="tag" style="color:#4c566b;width:159.6px">International taxation</span></div>
  <div class="cdiv"></div>
  <div class="ic" style="left:16.5px"><svg width="16" height="12" viewBox="0 0 16 12"><rect x="0.75" y="0.75" width="14.5" height="10.5" rx="1" fill="none" stroke="#7fb0e0" stroke-width="1.5"/><path d="M1 1.5 L8 6.5 L15 1.5" fill="none" stroke="#7fb0e0" stroke-width="1.5"/></svg></div><div class="ct" style="left:40.5px">contact@justiceleaguelaw.de</div>
  <div class="ic" style="left:253.5px"><svg width="14" height="14" viewBox="0 0 14 14"><path d="M1.3 1.6 L3.9 0.9 L5.3 3.8 L4 5.2 C4.6 6.9 6.8 9.3 8.6 10 L9.9 8.7 L12.9 10 L12.3 12.6 C12.1 13.1 11.6 13.2 11.1 13.1 C5.9 12.3 1.7 8.1 0.9 2.7 C0.8 2.2 0.9 1.8 1.3 1.6Z" fill="none" stroke="#80b2e2" stroke-width="1.35" stroke-linejoin="round"/></svg></div><div class="ct" style="left:277px">+49 (89) 98765432</div>
  <div class="ic pin" style="left:430.75px"><svg width="12" height="14" viewBox="0 0 12 14"><path d="M6 13.2C3.4 10.6 0.9 8.2 0.9 5.4A5.1 5.1 0 0 1 11.1 5.4C11.1 8.2 8.6 10.6 6 13.2z" fill="none" stroke="#80b2e2" stroke-width="1.2"/><circle cx="5.6" cy="5.6" r="0.9" fill="#6d8fb0"/></svg></div><div class="ct city" style="left:452.75px">Munich</div>
  <div class="ic" style="left:524.5px"><svg width="15" height="15" viewBox="0 0 15 15"><circle cx="7.4" cy="7.3" r="6.5" fill="none" stroke="#80b2e2" stroke-width="1.3"/><path d="M6.9 3.3V6.9L9.4 9.5" fill="none" stroke="#80b2e2" stroke-width="1.3" stroke-linecap="round"/></svg></div><div class="ct" style="left:548.5px">Mon-Fri&nbsp;&nbsp;11:00-20:00</div>
</div><div class="card" style="top:455px">
  <div class="logo"><svg width="52" height="52" viewBox="0 0 52 52" style="position:absolute;left:-1px;top:-1px"><circle cx="30" cy="30.6" r="9" fill="#2f8ff5"/><circle cx="22.1" cy="22.6" r="9.2" fill="#1a68ec"/></svg></div>
  <div class="cname" style="left:84px">Rhine Valley Legal Solutions</div>
  <div class="tags"><span class="tag" style="color:#6b717c;width:73.4px">Finance</span><span class="tag" style="color:#6b717c;width:159.6px">International taxation</span><span class="tag" style="color:#6b717c;width:78.3px">Taxation</span><span class="tag" style="color:#4c566b;width:61.8px">Loans</span></div>
  <div class="cdiv"></div>
  <div class="ic" style="left:16.5px"><svg width="16" height="12" viewBox="0 0 16 12"><rect x="0.75" y="0.75" width="14.5" height="10.5" rx="1" fill="none" stroke="#7fb0e0" stroke-width="1.5"/><path d="M1 1.5 L8 6.5 L15 1.5" fill="none" stroke="#7fb0e0" stroke-width="1.5"/></svg></div><div class="ct" style="left:40.5px">info@rhinevalleylegal.de</div>
  <div class="ic" style="left:221.5px"><svg width="14" height="14" viewBox="0 0 14 14"><path d="M1.3 1.6 L3.9 0.9 L5.3 3.8 L4 5.2 C4.6 6.9 6.8 9.3 8.6 10 L9.9 8.7 L12.9 10 L12.3 12.6 C12.1 13.1 11.6 13.2 11.1 13.1 C5.9 12.3 1.7 8.1 0.9 2.7 C0.8 2.2 0.9 1.8 1.3 1.6Z" fill="none" stroke="#80b2e2" stroke-width="1.35" stroke-linejoin="round"/></svg></div><div class="ct" style="left:245.25px">+49 (40) 12356478</div>
  <div class="ic pin" style="left:397.0px"><svg width="12" height="14" viewBox="0 0 12 14"><path d="M6 13.2C3.4 10.6 0.9 8.2 0.9 5.4A5.1 5.1 0 0 1 11.1 5.4C11.1 8.2 8.6 10.6 6 13.2z" fill="none" stroke="#80b2e2" stroke-width="1.2"/><circle cx="5.6" cy="5.6" r="0.9" fill="#6d8fb0"/></svg></div><div class="ct city" style="left:419px">Munich</div>
  <div class="ic" style="left:491px"><svg width="15" height="15" viewBox="0 0 15 15"><circle cx="7.4" cy="7.3" r="6.5" fill="none" stroke="#80b2e2" stroke-width="1.3"/><path d="M6.9 3.3V6.9L9.4 9.5" fill="none" stroke="#80b2e2" stroke-width="1.3" stroke-linecap="round"/></svg></div><div class="ct" style="left:514.75px">Mon-Fri&nbsp;&nbsp;10:00-16:00</div>
</div><div class="card" style="top:602px">
  <div class="logo"><svg width="52" height="52" viewBox="0 0 52 52" style="position:absolute;left:-1px;top:-1px"><circle cx="26.4" cy="26.7" r="13" fill="#3b30d6"/><path d="M25.9 17.85 A9 9.3 0 1 0 25.9 35.15 Z" fill="#a9b8fb"/><ellipse cx="25.9" cy="26.6" rx="4.4" ry="8.5" fill="#fff"/><rect x="25.9" y="24.4" width="16" height="5.3" fill="#fff"/></svg></div>
  <div class="cname" style="left:88px">Hamburg Legal Associates</div>
  <div class="tags"><span class="tag" style="color:#4c566b;width:78.3px">Taxation</span><span class="tag" style="color:#4c566b;width:73.4px">Finance</span><span class="tag" style="color:#4c566b;width:60.8px">Taxes</span><span class="tag" style="color:#4c566b;width:61.8px">Loans</span><span class="tag" style="color:#4c566b;width:159.6px">International taxation</span></div>
  <div class="cdiv"></div>
  <div class="ic" style="left:16.5px"><svg width="16" height="12" viewBox="0 0 16 12"><rect x="0.75" y="0.75" width="14.5" height="10.5" rx="1" fill="none" stroke="#7fb0e0" stroke-width="1.5"/><path d="M1 1.5 L8 6.5 L15 1.5" fill="none" stroke="#7fb0e0" stroke-width="1.5"/></svg></div><div class="ct" style="left:40.5px">contact@hamburglegal.de</div>
  <div class="ic" style="left:234px"><svg width="14" height="14" viewBox="0 0 14 14"><path d="M1.3 1.6 L3.9 0.9 L5.3 3.8 L4 5.2 C4.6 6.9 6.8 9.3 8.6 10 L9.9 8.7 L12.9 10 L12.3 12.6 C12.1 13.1 11.6 13.2 11.1 13.1 C5.9 12.3 1.7 8.1 0.9 2.7 C0.8 2.2 0.9 1.8 1.3 1.6Z" fill="none" stroke="#80b2e2" stroke-width="1.35" stroke-linejoin="round"/></svg></div><div class="ct" style="left:257.75px">+49 (30) 12345678</div>
  <div class="ic pin" style="left:409.0px"><svg width="12" height="14" viewBox="0 0 12 14"><path d="M6 13.2C3.4 10.6 0.9 8.2 0.9 5.4A5.1 5.1 0 0 1 11.1 5.4C11.1 8.2 8.6 10.6 6 13.2z" fill="none" stroke="#80b2e2" stroke-width="1.2"/><circle cx="5.6" cy="5.6" r="0.9" fill="#6d8fb0"/></svg></div><div class="ct city" style="left:431px">Hamburg</div>
  <div class="ic" style="left:515.25px"><svg width="15" height="15" viewBox="0 0 15 15"><circle cx="7.4" cy="7.3" r="6.5" fill="none" stroke="#80b2e2" stroke-width="1.3"/><path d="M6.9 3.3V6.9L9.4 9.5" fill="none" stroke="#80b2e2" stroke-width="1.3" stroke-linecap="round"/></svg></div><div class="ct" style="left:538.5px">Mon-Fri&nbsp;&nbsp;8:00-22:00</div>
</div><div class="card" style="top:749px">
  <div class="logo"><svg width="52" height="52" viewBox="0 0 52 52" style="position:absolute;left:-1px;top:-1px"><path d="M15.4 13.1 H28.1 A7.9 9.2 0 0 1 29.4 31.4 Z" fill="#f0843a"/><path d="M15.4 13.1 L29.4 31.4 H15.4Z" fill="#52b0f7"/><path d="M15.4 31.4 H29.4 L36 41.3 H22.2Z" fill="#2e8cf5"/></svg></div>
  <div class="cname" style="left:84px">Frankfurt Law Group</div>
  <div class="tags"><span class="tag" style="color:#6b717c;width:159.6px">International taxation</span><span class="tag" style="color:#4c566b;width:73.4px">Finance</span><span class="tag" style="color:#4c566b;width:159.6px">International taxation</span></div>
  <div class="cdiv"></div>
  <div class="ic" style="left:16.5px"><svg width="16" height="12" viewBox="0 0 16 12"><rect x="0.75" y="0.75" width="14.5" height="10.5" rx="1" fill="none" stroke="#7fb0e0" stroke-width="1.5"/><path d="M1 1.5 L8 6.5 L15 1.5" fill="none" stroke="#7fb0e0" stroke-width="1.5"/></svg></div><div class="ct" style="left:40.5px">info@frankfurtlaw.de</div>
  <div class="ic" style="left:199.5px"><svg width="14" height="14" viewBox="0 0 14 14"><path d="M1.3 1.6 L3.9 0.9 L5.3 3.8 L4 5.2 C4.6 6.9 6.8 9.3 8.6 10 L9.9 8.7 L12.9 10 L12.3 12.6 C12.1 13.1 11.6 13.2 11.1 13.1 C5.9 12.3 1.7 8.1 0.9 2.7 C0.8 2.2 0.9 1.8 1.3 1.6Z" fill="none" stroke="#80b2e2" stroke-width="1.35" stroke-linejoin="round"/></svg></div><div class="ct" style="left:223.5px">+49 (69) 87654321</div>
  <div class="ic pin" style="left:374.0px"><svg width="12" height="14" viewBox="0 0 12 14"><path d="M6 13.2C3.4 10.6 0.9 8.2 0.9 5.4A5.1 5.1 0 0 1 11.1 5.4C11.1 8.2 8.6 10.6 6 13.2z" fill="none" stroke="#80b2e2" stroke-width="1.2"/><circle cx="5.6" cy="5.6" r="0.9" fill="#6d8fb0"/></svg></div><div class="ct city" style="left:396px">Frankfurt</div>
  <div class="ic" style="left:480.25px"><svg width="15" height="15" viewBox="0 0 15 15"><circle cx="7.4" cy="7.3" r="6.5" fill="none" stroke="#80b2e2" stroke-width="1.3"/><path d="M6.9 3.3V6.9L9.4 9.5" fill="none" stroke="#80b2e2" stroke-width="1.3" stroke-linecap="round"/></svg></div><div class="ct" style="left:504px">Mon-Fri&nbsp;&nbsp;9:00-18:00</div>
</div><div class="card" style="top:896px;background:linear-gradient(#f4f5f7 0,#e4e6ea 51px)">
  <div class="logo"><svg width="52" height="52" viewBox="0 0 52 52" style="position:absolute;left:-1px;top:-1px"><path d="M24.6 21.5 L37.6 18.7 L34.6 34.6 L19.3 38.1Z" fill="#9b7af5" stroke="#9b7af5" stroke-width="2.6" stroke-linejoin="round"/><path d="M19.9 16.5 L33.1 13.6 L30.2 28 L14.7 33.3Z" fill="#6a45d3" stroke="#6a45d3" stroke-width="2.6" stroke-linejoin="round"/></svg></div>
  <div class="cname" style="left:84px">Bavarian Legal Consultancy</div>
  <div class="tags"><span class="tag" style="color:#4c566b;width:78.3px">Taxation</span><span class="tag" style="color:#4c566b;width:73.4px">Finance</span><span class="tag" style="color:#4c566b;width:60.8px">Taxes</span><span class="tag" style="color:#4c566b;width:61.8px">Loans</span><span class="tag" style="color:#4c566b;width:159.6px">International taxation</span></div>
  <div class="cdiv"></div>
  <div class="ic" style="left:16.5px"><svg width="16" height="12" viewBox="0 0 16 12"><rect x="0.75" y="0.75" width="14.5" height="10.5" rx="1" fill="none" stroke="#7fb0e0" stroke-width="1.5"/><path d="M1 1.5 L8 6.5 L15 1.5" fill="none" stroke="#7fb0e0" stroke-width="1.5"/></svg></div><div class="ct" style="left:40.5px">info@bavarianlegal.de</div>
  <div class="ic" style="left:199.5px"><svg width="14" height="14" viewBox="0 0 14 14"><path d="M1.3 1.6 L3.9 0.9 L5.3 3.8 L4 5.2 C4.6 6.9 6.8 9.3 8.6 10 L9.9 8.7 L12.9 10 L12.3 12.6 C12.1 13.1 11.6 13.2 11.1 13.1 C5.9 12.3 1.7 8.1 0.9 2.7 C0.8 2.2 0.9 1.8 1.3 1.6Z" fill="none" stroke="#80b2e2" stroke-width="1.35" stroke-linejoin="round"/></svg></div><div class="ct" style="left:223.5px">+49 (89) 12345678</div>
  <div class="ic pin" style="left:374.0px"><svg width="12" height="14" viewBox="0 0 12 14"><path d="M6 13.2C3.4 10.6 0.9 8.2 0.9 5.4A5.1 5.1 0 0 1 11.1 5.4C11.1 8.2 8.6 10.6 6 13.2z" fill="none" stroke="#80b2e2" stroke-width="1.2"/><circle cx="5.6" cy="5.6" r="0.9" fill="#6d8fb0"/></svg></div><div class="ct city" style="left:396px">Munich</div>
  <div class="ic" style="left:480.25px"><svg width="15" height="15" viewBox="0 0 15 15"><circle cx="7.4" cy="7.3" r="6.5" fill="none" stroke="#80b2e2" stroke-width="1.3"/><path d="M6.9 3.3V6.9L9.4 9.5" fill="none" stroke="#80b2e2" stroke-width="1.3" stroke-linecap="round"/></svg></div><div class="ct" style="left:504px">Mon-Fri&nbsp;&nbsp;8:00-18:00</div>
</div></div>
  <div class="filter">
  <div class="ftitle">Filter</div>
  <div class="clear">Clear all</div>
  <div class="fdiv"></div>
  <div class="dist">Distance to your company</div>
  <div class="tip">25 km</div>
  <div class="track"></div><div class="trackfill"></div>
  <div class="thumb"></div>
  <div class="cat">Category</div>
  <div class="crow" style="top:250.1px;left:23px"><span class="cb"></span><span class="clab">Taxation</span></div><div class="chev" style="top:255.1px"><svg width="12" height="8" viewBox="0 0 12 8"><path d="M1 1.5 L6 6.5 L11 1.5" fill="none" stroke="#2b2f38" stroke-width="1.8"/></svg></div><div class="crow" style="top:284.6px;left:23px"><span class="cb minus"><svg width="18" height="18" viewBox="0 0 18 18"><path d="M4.5 9H13.5" stroke="#7fb3e6" stroke-width="1.6"/></svg></span><span class="clab">Finance</span></div><div class="chev" style="top:289.6px"><svg width="12" height="8" viewBox="0 0 12 8"><path d="M1 6.5 L6 1.5 L11 6.5" fill="none" stroke="#2b2f38" stroke-width="1.8"/></svg></div><div class="crow" style="top:319.1px;left:54px"><span class="cb checked"><svg width="18" height="18" viewBox="0 0 18 18"><path d="M4.8 9.2 L7.6 12 L13.2 6.2" fill="none" stroke="#fff" stroke-width="1.8" stroke-linecap="round" stroke-linejoin="round"/></svg></span><span class="clab">Taxes</span></div><div class="crow" style="top:353.6px;left:54px"><span class="cb checked"><svg width="18" height="18" viewBox="0 0 18 18"><path d="M4.8 9.2 L7.6 12 L13.2 6.2" fill="none" stroke="#fff" stroke-width="1.8" stroke-linecap="round" stroke-linejoin="round"/></svg></span><span class="clab">Loans</span></div><div class="crow" style="top:388.1px;left:54px"><span class="cb"></span><span class="clab">Subsidies</span></div><div class="crow" style="top:422.6px;left:23px"><span class="cb checked"><svg width="18" height="18" viewBox="0 0 18 18"><path d="M4.8 9.2 L7.6 12 L13.2 6.2" fill="none" stroke="#fff" stroke-width="1.8" stroke-linecap="round" stroke-linejoin="round"/></svg></span><span class="clab">International taxation</span></div><div class="chev" style="top:427.6px"><svg width="12" height="8" viewBox="0 0 12 8"><path d="M1 1.5 L6 6.5 L11 1.5" fill="none" stroke="#2b2f38" stroke-width="1.8"/></svg></div><div class="crow" style="top:457.1px;left:23px"><span class="cb"></span><span class="clab">Reporting</span></div><div class="chev" style="top:462.1px"><svg width="12" height="8" viewBox="0 0 12 8"><path d="M1 1.5 L6 6.5 L11 1.5" fill="none" stroke="#2b2f38" stroke-width="1.8"/></svg></div><div class="crow" style="top:491.6px;left:23px"><span class="cb"></span><span class="clab">Payroll Services</span></div><div class="chev" style="top:496.6px"><svg width="12" height="8" viewBox="0 0 12 8"><path d="M1 1.5 L6 6.5 L11 1.5" fill="none" stroke="#2b2f38" stroke-width="1.8"/></svg></div><div class="crow" style="top:526.1px;left:23px"><span class="cb"></span><span class="clab">Tax Law Firms</span></div><div class="chev" style="top:531.1px"><svg width="12" height="8" viewBox="0 0 12 8"><path d="M1 1.5 L6 6.5 L11 1.5" fill="none" stroke="#2b2f38" stroke-width="1.8"/></svg></div><div class="crow" style="top:560.6px;left:23px"><span class="cb"></span><span class="clab">Financial Consulting</span></div><div class="crow" style="top:595.1px;left:23px"><span class="cb"></span><span class="clab">Tax Compliance Training</span></div><div class="crow" style="top:629.6px;left:23px"><span class="cb"></span><span class="clab">Auditing Services</span></div>
</div>
</div>
</div></div>
  </div>
  <div class="tint"></div>
</div>
<div class="ustrip" style="left:300px"></div><div class="ustrip" style="left:1688px"></div>
<div id="browser">
<div class="tl" style="left:22.5px;background:#ee5f57"></div><div class="tl" style="left:44.5px;background:#f5b83e"></div><div class="tl" style="left:66.5px;background:#5fc546"></div>

<svg style="position:absolute;left:107px;top:20px" width="24" height="18" viewBox="0 0 24 18"><rect x="1" y="1" width="21" height="16" rx="2.5" fill="none" stroke="#fff" stroke-width="1.6"/><path d="M8.5 1V17" stroke="#fff" stroke-width="1.6"/><path d="M3.5 5h2.5M3.5 7.5h2.5M3.5 10h2.5" stroke="#fff" stroke-width="1.1"/></svg>
<svg style="position:absolute;left:158px;top:20px" width="12" height="18" viewBox="0 0 12 18"><path d="M10 1.5L2.5 9L10 16.5" fill="none" stroke="#fff" stroke-width="1.8"/></svg>
<svg style="position:absolute;left:194px;top:20px" width="12" height="18" viewBox="0 0 12 18"><path d="M2 1.5L9.5 9L2 16.5" fill="none" stroke="#fff" stroke-width="1.8"/></svg>
<svg style="position:absolute;left:381px;top:19px" width="18" height="20" viewBox="0 0 18 20"><path d="M9 1L16.5 3.5V9.5C16.5 14 13 17.3 9 19C5 17.3 1.5 14 1.5 9.5V3.5Z" fill="none" stroke="#fff" stroke-width="1.7"/><path d="M9 1L1.5 3.5V9.5C1.5 14 5 17.3 9 19Z" fill="#fff"/></svg>
<div style="position:absolute;left:418px;top:14px;width:564px;height:30px;border-radius:7px;background:rgba(200,215,220,0.38)"></div>
<svg style="position:absolute;left:661px;top:22.5px" width="10" height="13" viewBox="0 0 10 13"><path d="M2.3 6V4A2.7 2.7 0 0 1 7.7 4V6" fill="none" stroke="#e6e6e8" stroke-width="1.5"/><rect x="0.5" y="5.5" width="9" height="7" rx="1" fill="#e6e6e8"/></svg>
<div style="position:absolute;left:677px;top:20px;font-size:13.2px;line-height:18px;color:#fff">figma.com</div>
<svg style="position:absolute;left:962px;top:22px" width="14" height="14" viewBox="0 0 14 14"><path d="M11.5 7A4.5 4.5 0 1 1 7 2.5H10" fill="none" stroke="#d8dde0" stroke-width="1.3"/><path d="M8.5 0.8L10.5 2.5L8.5 4.3" fill="none" stroke="#d8dde0" stroke-width="1.3"/></svg>
<svg style="position:absolute;left:1223px;top:18px" width="22" height="22" viewBox="0 0 22 22"><circle cx="11" cy="11" r="9.2" fill="none" stroke="#fff" stroke-width="1.7"/><path d="M11 5.5V15.5M7 11.8L11 15.6L15 11.8" fill="none" stroke="#fff" stroke-width="1.7"/></svg>
<svg style="position:absolute;left:1269px;top:16px" width="20" height="24" viewBox="0 0 20 24"><path d="M6.5 8.5H3.5V22H16.5V8.5H13.5" fill="none" stroke="#fff" stroke-width="1.7"/><path d="M10 15V1.5M6 5.3L10 1.5L14 5.3" fill="none" stroke="#fff" stroke-width="1.7"/></svg>
<svg style="position:absolute;left:1314px;top:20px" width="20" height="18" viewBox="0 0 20 18"><path d="M10 1.5V16.5M2.5 9H17.5" stroke="#fff" stroke-width="1.9"/></svg>
<svg style="position:absolute;left:1358px;top:19px" width="20" height="20" viewBox="0 0 20 20"><rect x="1" y="1" width="14" height="14" rx="2.5" fill="none" stroke="#fff" stroke-width="1.6"/><rect x="5" y="5" width="14" height="14" rx="2.5" fill="#4a5e68" stroke="#fff" stroke-width="1.6"/></svg>

<div class="frame" style="height:917px;background:#15375f">
  <div class="sidebar">
    <svg class="si" style="left:29px;top:21px" width="18" height="18" viewBox="0 0 18 18"><rect x="1" y="1" width="16" height="16" rx="1.2" fill="none" stroke="#fff" stroke-width="1.8"/><path d="M12 1V17" stroke="#fff" stroke-width="1.8"/><path d="M5.5 5.5L9 9L5.5 12.5Z" fill="#fff"/></svg>
    <svg class="si" style="left:18px;top:63px" width="40" height="40" viewBox="0 0 40 40"><g fill="#7fb3e6"><path d="M11 2.9H29A3 3 0 0 1 29 8.9H5.2Z"/><path d="M3.6 12.8H36.4A2.75 2.75 0 0 1 36.4 18.3H9.9A2.25 2.25 0 0 0 9.9 22.8H36.4A2.65 2.65 0 0 1 36.4 28.1H3.6Q-0.6 20.45 3.6 12.8Z"/><path d="M5.2 32.5H29.25A2.75 2.75 0 0 1 29.25 38H10.5Z"/></g></svg>
    <div class="sdiv" style="top:121px"></div>
    <svg class="si" style="left:29px;top:151px" width="18" height="18" viewBox="0 0 18 18"><path d="M2 16.5V7.5L9 1.5L16 7.5V16.5H11.5V10.5H6.5V16.5Z" fill="none" stroke="#fff" stroke-width="1.8" stroke-linejoin="round"/></svg>
    <div class="cartc"><svg width="22" height="22" viewBox="0 0 22 22"><path d="M1 2.5h3l2.6 10.5h10.2l2.2-7.5H5.2" fill="none" stroke="#fff" stroke-width="1.9" stroke-linejoin="round"/><path d="M6.6 13l-1 3.2h12" fill="none" stroke="#fff" stroke-width="1.9"/><circle cx="7.5" cy="19.2" r="1.7" fill="#fff"/><circle cx="16" cy="19.2" r="1.7" fill="#fff"/></svg></div>
    <svg class="si" style="left:27px;top:792.5px" width="20" height="20" viewBox="0 0 20 20"><circle cx="10" cy="10" r="8.8" fill="none" stroke="#fff" stroke-width="1.7"/><path d="M7.2 7.6A2.8 2.8 0 1 1 10.8 10.3C10.2 10.6 10 11 10 11.8V12.3" fill="none" stroke="#fff" stroke-width="1.8"/><circle cx="10" cy="14.8" r="1.1" fill="#fff"/></svg>
    <div class="rtile" style="top:841px"><svg width="46" height="46" viewBox="0 0 46 46" style="position:absolute;left:0;top:0"><path d="M14.2 8.8 H24.2 A6.6 9.2 0 0 1 25.6 27.2 Z" fill="#f0843a"/><path d="M14.2 8.8 L25.6 27.2 H14.2Z" fill="#52b0f7"/><path d="M14.2 27.2 H25.6 L30.8 36.8 H20Z" fill="#2e8cf5"/></svg></div>
    <div class="sdiv" style="top:902px"></div>
  </div>
  <div class="vline"></div>
  <div class="panel" style="height:887px">
  <div class="closebtn"><svg width="16" height="16" viewBox="0 0 16 16"><path d="M2 2L14 14M14 2L2 14" stroke="#2a2e36" stroke-width="1.8"/></svg></div>
  <div class="title">Marketplace</div>
  <div class="hicon" style="left:967px;top:36px"><svg width="22" height="22" viewBox="0 0 22 22"><path d="M1.5 2.5h12v8.5h-9l-3 2.5z" fill="none" stroke="#535d70" stroke-width="1.9" stroke-linejoin="round"/><path d="M6 13.5h9l4.5 4v-13" fill="none" stroke="#535d70" stroke-width="1.9" stroke-linejoin="round"/></svg></div>
  <div class="badge" style="left:981px;top:23px">1</div>
  <div class="hicon" style="left:1028px;top:35px"><svg width="20" height="22" viewBox="0 0 20 22"><rect x="1.5" y="3.5" width="16" height="16.5" rx="1.5" fill="none" stroke="#535d70" stroke-width="1.9"/><path d="M6.5 3.5V2h6v1.5" fill="none" stroke="#535d70" stroke-width="1.9"/><path d="M6 15.5l1-3 5.5-5.5 2 2-5.5 5.5z" fill="#535d70"/></svg></div>
  <div class="hicon" style="left:1090px;top:38px"><svg width="22" height="16" viewBox="0 0 22 16"><path d="M1 3.2l2 2 3.5-4M1 11.2l2 2 3.5-4" fill="none" stroke="#535d70" stroke-width="1.7"/><path d="M10 5h10M10 13h10" stroke="#535d70" stroke-width="1.9"/></svg></div>
  <div class="badge" style="left:1103px;top:23px">2</div>
  <div class="actions">Actions <svg width="12" height="8" viewBox="0 0 12 8" style="margin-left:16.5px"><path d="M1 1.5L6 6.5L11 1.5" fill="none" stroke="#fff" stroke-width="1.8"/></svg></div>
  <div class="tabs"><div class="tab active">Companies</div><div class="tab prod">Products</div></div>
  <div class="search"><svg width="18" height="18" viewBox="0 0 18 18" style="position:absolute;left:17px;top:14px"><circle cx="7.2" cy="7.2" r="5.8" fill="none" stroke="#6aa6e0" stroke-width="1.8"/><path d="M11.5 11.5L16.5 16.5" stroke="#6aa6e0" stroke-width="1.9" stroke-linecap="round"/></svg><span class="stext">Search</span></div>
  <div class="fade"></div>
  <div class="list"><div class="card" style="top:161px">
  <div class="logo"><svg width="52" height="52" viewBox="0 0 52 52" style="position:absolute;left:-1px;top:-1px"><path d="M24.6 21.5 L37.6 18.7 L34.6 34.6 L19.3 38.1Z" fill="#9b7af5" stroke="#9b7af5" stroke-width="2.6" stroke-linejoin="round"/><path d="M19.9 16.5 L33.1 13.6 L30.2 28 L14.7 33.3Z" fill="#6a45d3" stroke="#6a45d3" stroke-width="2.6" stroke-linejoin="round"/></svg></div>
  <div class="cname" style="left:84px">LegalEase Attorneys</div>
  <div class="tags"><span class="tag" style="color:#4c566b;width:78.3px">Taxation</span><span class="tag" style="color:#4c566b;width:73.4px">Finance</span><span class="tag" style="color:#6b717c;width:60.8px">Taxes</span><span class="tag" style="color:#4c566b;width:61.8px">Loans</span><span class="tag" style="color:#4c566b;width:159.6px">International taxation</span></div>
  <div class="cdiv"></div>
  <div class="ic" style="left:16.5px"><svg width="16" height="12" viewBox="0 0 16 12"><rect x="0.75" y="0.75" width="14.5" height="10.5" rx="1" fill="none" stroke="#7fb0e0" stroke-width="1.5"/><path d="M1 1.5 L8 6.5 L15 1.5" fill="none" stroke="#7fb0e0" stroke-width="1.5"/></svg></div><div class="ct" style="left:40.5px">info@legaleaseattorneys.de</div>
  <div class="ic" style="left:244.75px"><svg width="14" height="14" viewBox="0 0 14 14"><path d="M1.3 1.6 L3.9 0.9 L5.3 3.8 L4 5.2 C4.6 6.9 6.8 9.3 8.6 10 L9.9 8.7 L12.9 10 L12.3 12.6 C12.1 13.1 11.6 13.2 11.1 13.1 C5.9 12.3 1.7 8.1 0.9 2.7 C0.8 2.2 0.9 1.8 1.3 1.6Z" fill="none" stroke="#80b2e2" stroke-width="1.35" stroke-linejoin="round"/></svg></div><div class="ct" style="left:268.5px">+49 (30) 12345678</div>
  <div class="ic pin" style="left:419.5px"><svg width="12" height="14" viewBox="0 0 12 14"><path d="M6 13.2C3.4 10.6 0.9 8.2 0.9 5.4A5.1 5.1 0 0 1 11.1 5.4C11.1 8.2 8.6 10.6 6 13.2z" fill="none" stroke="#80b2e2" stroke-width="1.2"/><circle cx="5.6" cy="5.6" r="0.9" fill="#6d8fb0"/></svg></div><div class="ct city" style="left:442px">Berlin</div>
  <div class="ic" style="left:502.75px"><svg width="15" height="15" viewBox="0 0 15 15"><circle cx="7.4" cy="7.3" r="6.5" fill="none" stroke="#80b2e2" stroke-width="1.3"/><path d="M6.9 3.3V6.9L9.4 9.5" fill="none" stroke="#80b2e2" stroke-width="1.3" stroke-linecap="round"/></svg></div><div class="ct" style="left:527px">Mon-Fri&nbsp;&nbsp;8:00-18:00</div>
</div><div class="card" style="top:308px">
  <div class="logo"><svg width="52" height="52" viewBox="0 0 52 52" style="position:absolute;left:-1px;top:-1px"><path d="M28.6 11.6 L17.9 23.4 H28.8Z" fill="#34c97a"/><path d="M34.7 29.3 L23.1 41.4 V29.3Z" fill="#27b56c"/><rect x="17.9" y="23.4" width="5.8" height="5.9" fill="#119a56"/><rect x="28.7" y="23.4" width="6" height="5.9" fill="#0b8147"/><path d="M23.6 23.4 L28.8 17.8 V29.3 L23.1 35.2Z" fill="#6be6a6"/></svg></div>
  <div class="cname" style="left:84px">Justice League</div>
  <div class="tags"><span class="tag" style="color:#4c566b;width:61.8px">Loans</span><span class="tag" style="color:#4c566b;width:60.8px">Taxes</span><span class="tag" style="color:#6b717c;width:78.3px">Taxation</span><span class="tag" style="color:#4c566b;width:159.6px">International taxation</span></div>
  <div class="cdiv"></div>
  <div class="ic" style="left:16.5px"><svg width="16" height="12" viewBox="0 0 16 12"><rect x="0.75" y="0.75" width="14.5" height="10.5" rx="1" fill="none" stroke="#7fb0e0" stroke-width="1.5"/><path d="M1 1.5 L8 6.5 L15 1.5" fill="none" stroke="#7fb0e0" stroke-width="1.5"/></svg></div><div class="ct" style="left:40.5px">contact@justiceleaguelaw.de</div>
  <div class="ic" style="left:253.5px"><svg width="14" height="14" viewBox="0 0 14 14"><path d="M1.3 1.6 L3.9 0.9 L5.3 3.8 L4 5.2 C4.6 6.9 6.8 9.3 8.6 10 L9.9 8.7 L12.9 10 L12.3 12.6 C12.1 13.1 11.6 13.2 11.1 13.1 C5.9 12.3 1.7 8.1 0.9 2.7 C0.8 2.2 0.9 1.8 1.3 1.6Z" fill="none" stroke="#80b2e2" stroke-width="1.35" stroke-linejoin="round"/></svg></div><div class="ct" style="left:277px">+49 (89) 98765432</div>
  <div class="ic pin" style="left:430.75px"><svg width="12" height="14" viewBox="0 0 12 14"><path d="M6 13.2C3.4 10.6 0.9 8.2 0.9 5.4A5.1 5.1 0 0 1 11.1 5.4C11.1 8.2 8.6 10.6 6 13.2z" fill="none" stroke="#80b2e2" stroke-width="1.2"/><circle cx="5.6" cy="5.6" r="0.9" fill="#6d8fb0"/></svg></div><div class="ct city" style="left:452.75px">Munich</div>
  <div class="ic" style="left:524.5px"><svg width="15" height="15" viewBox="0 0 15 15"><circle cx="7.4" cy="7.3" r="6.5" fill="none" stroke="#80b2e2" stroke-width="1.3"/><path d="M6.9 3.3V6.9L9.4 9.5" fill="none" stroke="#80b2e2" stroke-width="1.3" stroke-linecap="round"/></svg></div><div class="ct" style="left:548.5px">Mon-Fri&nbsp;&nbsp;11:00-20:00</div>
</div><div class="card" style="top:455px">
  <div class="logo"><svg width="52" height="52" viewBox="0 0 52 52" style="position:absolute;left:-1px;top:-1px"><circle cx="30" cy="30.6" r="9" fill="#2f8ff5"/><circle cx="22.1" cy="22.6" r="9.2" fill="#1a68ec"/></svg></div>
  <div class="cname" style="left:84px">Rhine Valley Legal Solutions</div>
  <div class="tags"><span class="tag" style="color:#6b717c;width:73.4px">Finance</span><span class="tag" style="color:#6b717c;width:159.6px">International taxation</span><span class="tag" style="color:#6b717c;width:78.3px">Taxation</span><span class="tag" style="color:#4c566b;width:61.8px">Loans</span></div>
  <div class="cdiv"></div>
  <div class="ic" style="left:16.5px"><svg width="16" height="12" viewBox="0 0 16 12"><rect x="0.75" y="0.75" width="14.5" height="10.5" rx="1" fill="none" stroke="#7fb0e0" stroke-width="1.5"/><path d="M1 1.5 L8 6.5 L15 1.5" fill="none" stroke="#7fb0e0" stroke-width="1.5"/></svg></div><div class="ct" style="left:40.5px">info@rhinevalleylegal.de</div>
  <div class="ic" style="left:221.5px"><svg width="14" height="14" viewBox="0 0 14 14"><path d="M1.3 1.6 L3.9 0.9 L5.3 3.8 L4 5.2 C4.6 6.9 6.8 9.3 8.6 10 L9.9 8.7 L12.9 10 L12.3 12.6 C12.1 13.1 11.6 13.2 11.1 13.1 C5.9 12.3 1.7 8.1 0.9 2.7 C0.8 2.2 0.9 1.8 1.3 1.6Z" fill="none" stroke="#80b2e2" stroke-width="1.35" stroke-linejoin="round"/></svg></div><div class="ct" style="left:245.25px">+49 (40) 12356478</div>
  <div class="ic pin" style="left:397.0px"><svg width="12" height="14" viewBox="0 0 12 14"><path d="M6 13.2C3.4 10.6 0.9 8.2 0.9 5.4A5.1 5.1 0 0 1 11.1 5.4C11.1 8.2 8.6 10.6 6 13.2z" fill="none" stroke="#80b2e2" stroke-width="1.2"/><circle cx="5.6" cy="5.6" r="0.9" fill="#6d8fb0"/></svg></div><div class="ct city" style="left:419px">Munich</div>
  <div class="ic" style="left:491px"><svg width="15" height="15" viewBox="0 0 15 15"><circle cx="7.4" cy="7.3" r="6.5" fill="none" stroke="#80b2e2" stroke-width="1.3"/><path d="M6.9 3.3V6.9L9.4 9.5" fill="none" stroke="#80b2e2" stroke-width="1.3" stroke-linecap="round"/></svg></div><div class="ct" style="left:514.75px">Mon-Fri&nbsp;&nbsp;10:00-16:00</div>
</div><div class="card" style="top:602px">
  <div class="logo"><svg width="52" height="52" viewBox="0 0 52 52" style="position:absolute;left:-1px;top:-1px"><circle cx="26.4" cy="26.7" r="13" fill="#3b30d6"/><path d="M25.9 17.85 A9 9.3 0 1 0 25.9 35.15 Z" fill="#a9b8fb"/><ellipse cx="25.9" cy="26.6" rx="4.4" ry="8.5" fill="#fff"/><rect x="25.9" y="24.4" width="16" height="5.3" fill="#fff"/></svg></div>
  <div class="cname" style="left:88px">Hamburg Legal Associates</div>
  <div class="tags"><span class="tag" style="color:#4c566b;width:78.3px">Taxation</span><span class="tag" style="color:#4c566b;width:73.4px">Finance</span><span class="tag" style="color:#4c566b;width:60.8px">Taxes</span><span class="tag" style="color:#4c566b;width:61.8px">Loans</span><span class="tag" style="color:#4c566b;width:159.6px">International taxation</span></div>
  <div class="cdiv"></div>
  <div class="ic" style="left:16.5px"><svg width="16" height="12" viewBox="0 0 16 12"><rect x="0.75" y="0.75" width="14.5" height="10.5" rx="1" fill="none" stroke="#7fb0e0" stroke-width="1.5"/><path d="M1 1.5 L8 6.5 L15 1.5" fill="none" stroke="#7fb0e0" stroke-width="1.5"/></svg></div><div class="ct" style="left:40.5px">contact@hamburglegal.de</div>
  <div class="ic" style="left:234px"><svg width="14" height="14" viewBox="0 0 14 14"><path d="M1.3 1.6 L3.9 0.9 L5.3 3.8 L4 5.2 C4.6 6.9 6.8 9.3 8.6 10 L9.9 8.7 L12.9 10 L12.3 12.6 C12.1 13.1 11.6 13.2 11.1 13.1 C5.9 12.3 1.7 8.1 0.9 2.7 C0.8 2.2 0.9 1.8 1.3 1.6Z" fill="none" stroke="#80b2e2" stroke-width="1.35" stroke-linejoin="round"/></svg></div><div class="ct" style="left:257.75px">+49 (30) 12345678</div>
  <div class="ic pin" style="left:409.0px"><svg width="12" height="14" viewBox="0 0 12 14"><path d="M6 13.2C3.4 10.6 0.9 8.2 0.9 5.4A5.1 5.1 0 0 1 11.1 5.4C11.1 8.2 8.6 10.6 6 13.2z" fill="none" stroke="#80b2e2" stroke-width="1.2"/><circle cx="5.6" cy="5.6" r="0.9" fill="#6d8fb0"/></svg></div><div class="ct city" style="left:431px">Hamburg</div>
  <div class="ic" style="left:515.25px"><svg width="15" height="15" viewBox="0 0 15 15"><circle cx="7.4" cy="7.3" r="6.5" fill="none" stroke="#80b2e2" stroke-width="1.3"/><path d="M6.9 3.3V6.9L9.4 9.5" fill="none" stroke="#80b2e2" stroke-width="1.3" stroke-linecap="round"/></svg></div><div class="ct" style="left:538.5px">Mon-Fri&nbsp;&nbsp;8:00-22:00</div>
</div><div class="card" style="top:749px;background:linear-gradient(#fff 35%,#eff0f3 100%)">
  <div class="logo"><svg width="52" height="52" viewBox="0 0 52 52" style="position:absolute;left:-1px;top:-1px"><path d="M15.4 13.1 H28.1 A7.9 9.2 0 0 1 29.4 31.4 Z" fill="#f0843a"/><path d="M15.4 13.1 L29.4 31.4 H15.4Z" fill="#52b0f7"/><path d="M15.4 31.4 H29.4 L36 41.3 H22.2Z" fill="#2e8cf5"/></svg></div>
  <div class="cname" style="left:84px">Frankfurt Law Group</div>
  <div class="tags"><span class="tag" style="color:#6b717c;width:159.6px">International taxation</span><span class="tag" style="color:#4c566b;width:73.4px">Finance</span><span class="tag" style="color:#4c566b;width:159.6px">International taxation</span></div>
  <div class="cdiv"></div>
  <div class="ic" style="left:16.5px"><svg width="16" height="12" viewBox="0 0 16 12"><rect x="0.75" y="0.75" width="14.5" height="10.5" rx="1" fill="none" stroke="#7fb0e0" stroke-width="1.5"/><path d="M1 1.5 L8 6.5 L15 1.5" fill="none" stroke="#7fb0e0" stroke-width="1.5"/></svg></div><div class="ct" style="left:40.5px">info@frankfurtlaw.de</div>
  <div class="ic" style="left:199.5px"><svg width="14" height="14" viewBox="0 0 14 14"><path d="M1.3 1.6 L3.9 0.9 L5.3 3.8 L4 5.2 C4.6 6.9 6.8 9.3 8.6 10 L9.9 8.7 L12.9 10 L12.3 12.6 C12.1 13.1 11.6 13.2 11.1 13.1 C5.9 12.3 1.7 8.1 0.9 2.7 C0.8 2.2 0.9 1.8 1.3 1.6Z" fill="none" stroke="#80b2e2" stroke-width="1.35" stroke-linejoin="round"/></svg></div><div class="ct" style="left:223.5px">+49 (69) 87654321</div>
  <div class="ic pin" style="left:374.0px"><svg width="12" height="14" viewBox="0 0 12 14"><path d="M6 13.2C3.4 10.6 0.9 8.2 0.9 5.4A5.1 5.1 0 0 1 11.1 5.4C11.1 8.2 8.6 10.6 6 13.2z" fill="none" stroke="#80b2e2" stroke-width="1.2"/><circle cx="5.6" cy="5.6" r="0.9" fill="#6d8fb0"/></svg></div><div class="ct city" style="left:396px">Frankfurt</div>
  <div class="ic" style="left:480.25px"><svg width="15" height="15" viewBox="0 0 15 15"><circle cx="7.4" cy="7.3" r="6.5" fill="none" stroke="#80b2e2" stroke-width="1.3"/><path d="M6.9 3.3V6.9L9.4 9.5" fill="none" stroke="#80b2e2" stroke-width="1.3" stroke-linecap="round"/></svg></div><div class="ct" style="left:504px">Mon-Fri&nbsp;&nbsp;9:00-18:00</div>
</div></div>
  <div class="filter">
  <div class="ftitle">Filter</div>
  <div class="clear">Clear all</div>
  <div class="fdiv"></div>
  <div class="dist">Distance to your company</div>
  <div class="tip">25 km</div>
  <div class="track"></div><div class="trackfill"></div>
  <div class="thumb"></div>
  <div class="cat">Category</div>
  <div class="crow" style="top:250.1px;left:23px"><span class="cb"></span><span class="clab">Taxation</span></div><div class="chev" style="top:255.1px"><svg width="12" height="8" viewBox="0 0 12 8"><path d="M1 1.5 L6 6.5 L11 1.5" fill="none" stroke="#2b2f38" stroke-width="1.8"/></svg></div><div class="crow" style="top:284.6px;left:23px"><span class="cb minus"><svg width="18" height="18" viewBox="0 0 18 18"><path d="M4.5 9H13.5" stroke="#7fb3e6" stroke-width="1.6"/></svg></span><span class="clab">Finance</span></div><div class="chev" style="top:289.6px"><svg width="12" height="8" viewBox="0 0 12 8"><path d="M1 6.5 L6 1.5 L11 6.5" fill="none" stroke="#2b2f38" stroke-width="1.8"/></svg></div><div class="crow" style="top:319.1px;left:54px"><span class="cb checked"><svg width="18" height="18" viewBox="0 0 18 18"><path d="M4.8 9.2 L7.6 12 L13.2 6.2" fill="none" stroke="#fff" stroke-width="1.8" stroke-linecap="round" stroke-linejoin="round"/></svg></span><span class="clab">Taxes</span></div><div class="crow" style="top:353.6px;left:54px"><span class="cb checked"><svg width="18" height="18" viewBox="0 0 18 18"><path d="M4.8 9.2 L7.6 12 L13.2 6.2" fill="none" stroke="#fff" stroke-width="1.8" stroke-linecap="round" stroke-linejoin="round"/></svg></span><span class="clab">Loans</span></div><div class="crow" style="top:388.1px;left:54px"><span class="cb"></span><span class="clab">Subsidies</span></div><div class="crow" style="top:422.6px;left:23px"><span class="cb checked"><svg width="18" height="18" viewBox="0 0 18 18"><path d="M4.8 9.2 L7.6 12 L13.2 6.2" fill="none" stroke="#fff" stroke-width="1.8" stroke-linecap="round" stroke-linejoin="round"/></svg></span><span class="clab">International taxation</span></div><div class="chev" style="top:427.6px"><svg width="12" height="8" viewBox="0 0 12 8"><path d="M1 1.5 L6 6.5 L11 1.5" fill="none" stroke="#2b2f38" stroke-width="1.8"/></svg></div><div class="crow" style="top:457.1px;left:23px"><span class="cb"></span><span class="clab">Reporting</span></div><div class="chev" style="top:462.1px"><svg width="12" height="8" viewBox="0 0 12 8"><path d="M1 1.5 L6 6.5 L11 1.5" fill="none" stroke="#2b2f38" stroke-width="1.8"/></svg></div><div class="crow" style="top:491.6px;left:23px"><span class="cb"></span><span class="clab">Payroll Services</span></div><div class="chev" style="top:496.6px"><svg width="12" height="8" viewBox="0 0 12 8"><path d="M1 1.5 L6 6.5 L11 1.5" fill="none" stroke="#2b2f38" stroke-width="1.8"/></svg></div><div class="crow" style="top:526.1px;left:23px"><span class="cb"></span><span class="clab">Tax Law Firms</span></div><div class="chev" style="top:531.1px"><svg width="12" height="8" viewBox="0 0 12 8"><path d="M1 1.5 L6 6.5 L11 1.5" fill="none" stroke="#2b2f38" stroke-width="1.8"/></svg></div><div class="crow" style="top:560.6px;left:23px"><span class="cb"></span><span class="clab">Financial Consulting</span></div><div class="crow" style="top:595.1px;left:23px"><span class="cb"></span><span class="clab">Tax Compliance Training</span></div><div class="crow" style="top:629.6px;left:23px"><span class="cb"></span><span class="clab">Auditing Services</span></div>
</div>
</div>
</div>
</div>
</div></body></html>
